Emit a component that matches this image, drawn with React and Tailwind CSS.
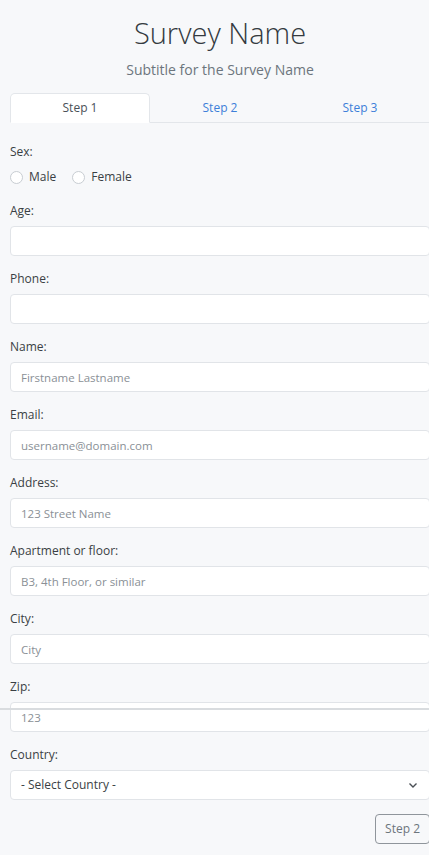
import { useState } from "react";

const fields = [
  { label: "Age:", placeholder: "" },
  { label: "Phone:", placeholder: "" },
  { label: "Name:", placeholder: "Firstname Lastname" },
  { label: "Email:", placeholder: "username@domain.com" },
  { label: "Address:", placeholder: "123 Street Name" },
  { label: "Apartment or floor:", placeholder: "B3, 4th Floor, or similar" },
  { label: "City:", placeholder: "City" },
  { label: "Zip:", placeholder: "123", rule: true },
];

export default function App() {
  const [tab, setTab] = useState(0);
  const [sex, setSex] = useState("");

  return (
    <div
      className="h-[855px] w-full overflow-hidden bg-[#f7f8fa] text-[#3a3f44]"
      style={{ fontFamily: '"Open Sans", "Noto Sans", sans-serif' }}
    >
      <div className="ml-[10px] w-[420px]">
        {/* Header */}
        <h1 className="pt-[15px] text-center text-[29px] font-light leading-[36px] text-[#343a40]">
          Survey Name
        </h1>
        <p className="mt-[8px] text-center text-[14px] leading-[22px] text-[#6c757d]">
          Subtitle for the Survey Name
        </p>

        {/* Tabs */}
        <div className="mt-[12px] flex border-b border-[#e3e6ea]">
          {["Step 1", "Step 2", "Step 3"].map((t, i) => (
            <button
              key={t}
              onClick={() => setTab(i)}
              className={`-mb-px h-[30px] w-[140px] rounded-t-[5px] border text-[12px] ${
                tab === i
                  ? "border-[#e3e6ea] border-b-white bg-white text-[#495057]"
                  : "border-transparent text-[#3d7fd9]"
              }`}
            >
              {t}
            </button>
          ))}
        </div>

        {/* Sex */}
        <div className="mt-[20px] text-[12px] leading-[18px]">Sex:</div>
        <div className="mt-[7px] flex items-center text-[12px] leading-[18px]">
          {["Male", "Female"].map((s) => (
            <label key={s} className="mr-[16px] flex items-center gap-[6px]">
              <span
                onClick={() => setSex(s)}
                className="flex h-[13px] w-[13px] items-center justify-center rounded-full border border-[#c8cdd2] bg-white"
              >
                {sex === s && <span className="h-[5px] w-[5px] rounded-full bg-[#3d7fd9]" />}
              </span>
              {s}
            </label>
          ))}
        </div>

        {/* Fields */}
        <div className="mt-[16px] flex flex-col gap-[14px]">
          {fields.map((f) => (
            <div key={f.label}>
              <div className="text-[12px] leading-[18px]">{f.label}</div>
              <div className="relative mt-[6px]">
                <input
                  type="text"
                  placeholder={f.placeholder}
                  className="h-[30px] w-full rounded-[4px] border border-[#e1e4e8] bg-white px-[10px] text-[11.5px] text-[#495057] placeholder-[#8a9096] outline-none"
                />
                {f.rule && (
                  <div className="absolute left-[-10px] right-0 top-[6px] h-[2px] bg-[#d9dcdf]" />
                )}
              </div>
            </div>
          ))}

          {/* Country */}
          <div>
            <div className="text-[12px] leading-[18px]">Country:</div>
            <div className="relative mt-[6px]">
              <select className="h-[30px] w-full appearance-none rounded-[4px] border border-[#e1e4e8] bg-white px-[10px] text-[12px] text-[#3a3f44] outline-none">
                <option>- Select Country -</option>
              </select>
              <svg
                className="pointer-events-none absolute right-[12px] top-[11px]"
                width="10"
                height="8"
                viewBox="0 0 10 8"
                fill="none"
                stroke="#4a4f55"
                strokeWidth="1.4"
              >
                <path d="M1.5 2.5 5 6 8.5 2.5" />
              </svg>
            </div>
          </div>
        </div>

        <div className="mt-[14px] flex justify-end">
          <button className="h-[30px] rounded-[4px] border border-[#8f959b] bg-[#f7f8fa] px-[9px] text-[12px] text-[#6c757d]">
            Step 2
          </button>
        </div>
      </div>
    </div>
  );
}
